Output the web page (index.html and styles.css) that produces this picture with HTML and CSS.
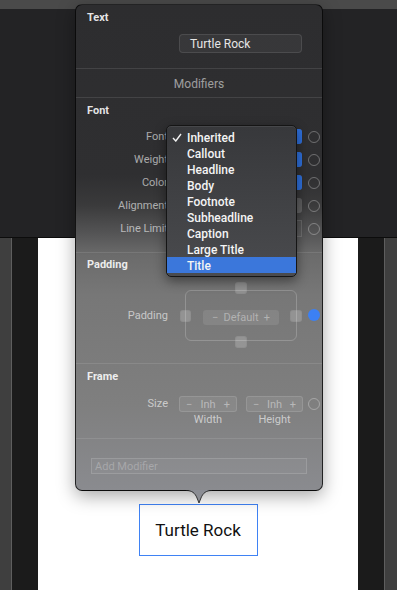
FILE: index.html
```html
<!DOCTYPE html>
<html lang="en">
<head>
  <meta charset="UTF-8" />
  <meta name="viewport" content="width=device-width, initial-scale=1" />
  <title>Text Inspector</title>
  <link rel="stylesheet" href="styles.css">
</head>
<body>
  <div class="topbar"></div>
  <div class="canvas-top"></div>
  <div class="device-row">
    <div class="rail rail-left"></div>
    <div class="bezel"></div>
    <div class="screen">
      <div class="preview-text">Turtle Rock</div>
    </div>
    <div class="bezel"></div>
    <div class="rail rail-right"></div>
  </div>

  <div class="popover">
    <div class="section section-text">
      <div class="section-title">Text</div>
      <div class="text-field">Turtle Rock</div>
    </div>

    <div class="modifiers-bar">Modifiers</div>

    <div class="section section-font">
      <div class="section-title">Font</div>
      <div class="rows">
        <div class="prop">
          <span class="label">Font</span>
          <div class="ctrl"><div class="popup"><span class="cap"><svg width="6" height="9" viewBox="0 0 6 9"><path d="M1 3.5 L3 1.5 L5 3.5 M1 5.5 L3 7.5 L5 5.5" stroke="#fff" stroke-width="1.1" fill="none"/></svg></span></div></div>
          <span class="dot"></span>
        </div>
        <div class="prop">
          <span class="label">Weight</span>
          <div class="ctrl"><div class="popup"><span class="cap"><svg width="6" height="9" viewBox="0 0 6 9"><path d="M1 3.5 L3 1.5 L5 3.5 M1 5.5 L3 7.5 L5 5.5" stroke="#fff" stroke-width="1.1" fill="none"/></svg></span></div></div>
          <span class="dot"></span>
        </div>
        <div class="prop">
          <span class="label">Color</span>
          <div class="ctrl"><div class="popup"><span class="cap"><svg width="6" height="9" viewBox="0 0 6 9"><path d="M1 3.5 L3 1.5 L5 3.5 M1 5.5 L3 7.5 L5 5.5" stroke="#fff" stroke-width="1.1" fill="none"/></svg></span></div></div>
          <span class="dot"></span>
        </div>
        <div class="prop">
          <span class="label">Alignment</span>
          <div class="ctrl"><div class="segmented"></div></div>
          <span class="dot"></span>
        </div>
        <div class="prop">
          <span class="label">Line Limit</span>
          <div class="ctrl"><div class="limit-field"></div></div>
          <span class="dot"></span>
        </div>
      </div>
    </div>

    <div class="section section-padding">
      <div class="section-title">Padding</div>
      <div class="prop pad-row">
        <span class="label">Padding</span>
        <div class="ctrl pad-grid">
          <div class="pad-box"></div>
          <div class="pad-sq sq-top"></div>
          <div class="pad-sq sq-left"></div>
          <div class="pad-field"><span>−</span><span>Default</span><span>+</span></div>
          <div class="pad-sq sq-right"></div>
          <div class="pad-sq sq-bottom"></div>
        </div>
        <span class="dot dot-on"></span>
      </div>
    </div>

    <div class="section section-frame">
      <div class="section-title">Frame</div>
      <div class="prop size-row">
        <span class="label">Size</span>
        <div class="ctrl size-ctrl">
          <div class="size-col">
            <div class="stepper"><span>−</span><span>Inh</span><span>+</span></div>
            <div class="sub">Width</div>
          </div>
          <div class="size-col">
            <div class="stepper"><span>−</span><span>Inh</span><span>+</span></div>
            <div class="sub">Height</div>
          </div>
        </div>
        <span class="dot"></span>
      </div>
    </div>

    <div class="section-add">
      <div class="add-field">Add Modifier</div>
    </div>

    <svg class="arrow" width="26" height="14" viewBox="0 0 26 14">
      <path d="M0 0 H26 V0.5 C20 0.5 17 3 15 8 L13 13 L11 8 C9 3 6 0.5 0 0.5 Z" fill="#8b8d94"/>
      <path d="M0 0.5 C6 0.5 9 3 11 8 L13 13 L15 8 C17 3 20 0.5 26 0.5" stroke="rgba(0,0,0,0.7)" stroke-width="1" fill="none"/>
    </svg>

    <div class="menu">
      <div class="menu-item"><span class="check"><svg width="10" height="9" viewBox="0 0 10 9"><path d="M1 5 L3.8 8 L9 1" stroke="#f2f2f2" stroke-width="1.4" fill="none"/></svg></span>Inherited</div>
      <div class="menu-item"><span class="check"></span>Callout</div>
      <div class="menu-item"><span class="check"></span>Headline</div>
      <div class="menu-item"><span class="check"></span>Body</div>
      <div class="menu-item"><span class="check"></span>Footnote</div>
      <div class="menu-item"><span class="check"></span>Subheadline</div>
      <div class="menu-item"><span class="check"></span>Caption</div>
      <div class="menu-item"><span class="check"></span>Large Title</div>
      <div class="menu-item selected"><span class="check"></span>Title</div>
    </div>
  </div>
</body>
</html>
```

FILE: styles.css
```css
/* Xcode style inspector popover over the canvas */
body {
  margin: 0;
  width: 397px;
  height: 590px;
  overflow: hidden;
  position: relative;
  background: #232325;
  font-family: Roboto, "Liberation Sans", sans-serif;
}
.topbar {
  height: 9px;
  background: #4a4a4a;
}
.canvas-top {
  height: 228px;
  background: #232325;
  border-bottom: 1px solid #0c0c0c;
}
.device-row {
  display: flex;
  height: 352px;
}
.rail {
  width: 11px;
  background: #3f3f3f;
}
.rail-left {
  border-right: 1px solid #5e5e5e;
}
.rail-right {
  width: 12px;
  border-left: 1px solid #5e5e5e;
}
.bezel {
  width: 26px;
  background: #1b1b1b;
}
.screen {
  width: 320px;
  background: #fff;
  display: flex;
  justify-content: center;
  align-items: flex-start;
  padding-top: 266px;
  box-sizing: border-box;
}
.preview-text {
  width: 119px;
  height: 52px;
  box-sizing: border-box;
  border: 1px solid #3f82f4;
  display: flex;
  align-items: center;
  justify-content: center;
  font-size: 17px;
  color: #111;
}

/* popover */
.popover {
  position: absolute;
  left: 75px;
  top: 4px;
  width: 248px;
  height: 487px;
  box-sizing: border-box;
  border: 1px solid rgba(0, 0, 0, 0.75);
  border-radius: 7px;
  background: linear-gradient(180deg, #2d2d2f 0px, #2f2f31 170px, #3a3a3b 200px, #545455 228px, #6b6b6b 250px, #777 290px, #7f7f7f 400px, #8a8b8f 100%);
  box-shadow: 0 5px 18px rgba(0, 0, 0, 0.35);
  color: #fff;
}
.section {
  padding: 6px 0 0 11px;
  border-bottom: 1px solid rgba(255, 255, 255, 0.1);
}
.section-title {
  font-size: 11px;
  font-weight: 700;
  line-height: 13px;
  color: rgba(255, 255, 255, 0.88);
}
.section-text {
  padding-bottom: 15px;
}
.text-field {
  margin: 10px 0 0 92px;
  width: 123px;
  height: 19px;
  box-sizing: border-box;
  border: 1px solid rgba(255, 255, 255, 0.1);
  background: rgba(255, 255, 255, 0.05);
  border-radius: 4px;
  padding: 1px 0 0 10px;
  font-size: 12px;
  line-height: 17px;
  color: #e6e6e6;
}
.modifiers-bar {
  height: 27px;
  padding-top: 1px;
  line-height: 28px;
  border-bottom: 1px solid rgba(255, 255, 255, 0.1);
  text-align: center;
  font-size: 12px;
  color: rgba(255, 255, 255, 0.55);
}
.section-font {
  padding-bottom: 12px;
}
.rows {
  margin-top: 8px;
}
.prop {
  display: flex;
  align-items: center;
  height: 23px;
}
.label {
  width: 81px;
  flex: none;
  text-align: right;
  white-space: nowrap;
  font-size: 11px;
  color: rgba(255, 255, 255, 0.6);
}
.ctrl {
  margin-left: 11px;
  width: 124px;
  flex: none;
}
.dot {
  margin-left: 5px;
  width: 12px;
  height: 12px;
  flex: none;
  box-sizing: border-box;
  border-radius: 50%;
  border: 1px solid rgba(255, 255, 255, 0.3);
}
.dot-on {
  border: none;
  background: #3c80f3;
}
.popup {
  width: 123px;
  height: 15px;
  border-radius: 3px;
  background: rgba(255, 255, 255, 0.16);
  display: flex;
  justify-content: flex-end;
}
.cap {
  width: 16px;
  height: 15px;
  border-radius: 0 3px 3px 0;
  background: #2e6fdb;
  display: flex;
  align-items: center;
  justify-content: center;
}
.segmented {
  width: 123px;
  height: 15px;
  border-radius: 3px;
  background: rgba(255, 255, 255, 0.18);
}
.limit-field {
  width: 123px;
  height: 17px;
  box-sizing: border-box;
  border: 1px solid rgba(255, 255, 255, 0.12);
  background: rgba(255, 255, 255, 0.04);
}

/* padding editor */
.section-padding {
  padding-top: 5px;
  padding-bottom: 15px;
}
.pad-row {
  margin-top: 11px;
  height: 66px;
}
.pad-grid {
  display: grid;
  grid-template-columns: 1px 5px 6px 12px 32px 12px 32px 11px 7px 5px 1px;
  grid-template-rows: 8px 4px 16px 12px 3px 11px 5px 7px;
}
.pad-box {
  grid-column: 3 / 10;
  grid-row: 2 / 8;
  border: 1px solid rgba(255, 255, 255, 0.2);
  border-radius: 6px;
}
.pad-sq {
  box-sizing: border-box;
  border-radius: 3px;
  background: rgba(255, 255, 255, 0.2);
  border: 1px solid rgba(0, 0, 0, 0.04);
}
.sq-top {
  grid-column: 6 / 7;
  grid-row: 1 / 3;
}
.sq-bottom {
  grid-column: 6 / 7;
  grid-row: 7 / 9;
}
.sq-left {
  grid-column: 2 / 4;
  grid-row: 4 / 5;
}
.sq-right {
  grid-column: 9 / 11;
  grid-row: 4 / 5;
}
.pad-field {
  grid-column: 5 / 8;
  grid-row: 4 / 6;
  display: flex;
  justify-content: space-between;
  align-items: center;
  padding: 0 9px;
  border-radius: 3px;
  background: rgba(255, 255, 255, 0.09);
  font-size: 11px;
  color: rgba(255, 255, 255, 0.38);
}

/* frame */
.section-frame {
  padding-bottom: 14px;
}
.size-row {
  margin-top: 13px;
  height: 28px;
  align-items: flex-start;
}
.size-row .label {
  line-height: 16px;
}
.size-row .dot {
  margin-top: 2px;
}
.size-ctrl {
  display: flex;
  gap: 9px;
}
.size-col {
  width: 58px;
}
.size-col + .size-col {
  width: 57px;
}
.stepper {
  height: 16px;
  box-sizing: border-box;
  display: flex;
  justify-content: space-between;
  align-items: center;
  padding: 0 6px;
  border: 1px solid rgba(255, 255, 255, 0.12);
  border-radius: 3px;
  background: rgba(255, 255, 255, 0.07);
  font-size: 11px;
  color: rgba(255, 255, 255, 0.42);
}
.sub {
  text-align: center;
  font-size: 11px;
  line-height: 13px;
  padding-top: 1px;
  color: rgba(255, 255, 255, 0.6);
}
.section-add {
  padding: 19px 15px 16px;
}
.add-field {
  height: 16px;
  box-sizing: border-box;
  border: 1px solid rgba(255, 255, 255, 0.14);
  background: rgba(255, 255, 255, 0.04);
  padding-left: 3px;
  font-size: 11px;
  line-height: 15px;
  color: rgba(255, 255, 255, 0.25);
}
.arrow {
  position: absolute;
  left: 110px;
  top: 485px;
}

/* popup menu */
.menu {
  position: absolute;
  left: 90px;
  top: 120px;
  width: 131px;
  height: 152px;
  box-sizing: border-box;
  padding: 3px 0;
  border: 1px solid #151515;
  border-radius: 5px;
  background: linear-gradient(180deg, #37383b, #4a4b4e);
  box-shadow: 0 4px 12px rgba(0, 0, 0, 0.45), inset 0 1px 0 rgba(255, 255, 255, 0.08);
}
.menu-item {
  display: flex;
  align-items: center;
  height: 16px;
  box-sizing: border-box;
  padding-top: 1px;
  font-size: 12px;
  font-weight: 500;
  color: #f4f4f4;
}
.menu-item.selected {
  background: #3b77db;
}
.check {
  width: 20px;
  padding-left: 5px;
  box-sizing: border-box;
  display: flex;
  align-items: center;
}
```
